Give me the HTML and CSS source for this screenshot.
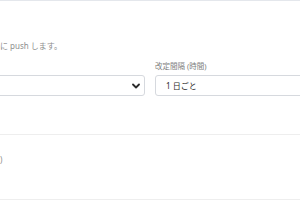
FILE: index.html
```html
<!DOCTYPE html>
<html lang="ja">
<head>
  <meta charset="UTF-8">
  <meta name="viewport" content="width=device-width, initial-scale=1.0">
  <title>設定</title>
  <link rel="stylesheet" href="styles.css">
</head>
<body>
  <section class="block">
    <p class="help">に push します。</p>

    <div class="fields">
      <div class="field">
        <label class="field-label">&nbsp;</label>
        <div class="select-wrap">
          <select class="control select">
            <option></option>
          </select>
          <svg class="chevron" width="8" height="6" viewBox="0 0 8 6">
            <path d="M1 1.5 L4 4.5 L7 1.5" fill="none" stroke="#2b2b2b" stroke-width="1.8" stroke-linecap="round" stroke-linejoin="round"/>
          </svg>
        </div>
      </div>
      <div class="field">
        <label class="field-label" for="interval">改定間隔 (時間)</label>
        <input class="control" id="interval" type="text" value="1 日ごと">
      </div>
    </div>
  </section>

  <section class="block block-second">
    <p class="help">)</p>
  </section>

  <section class="block block-third"></section>
</body>
</html>
```

FILE: styles.css
```css
* {
  margin: 0;
  padding: 0;
  box-sizing: border-box;
}

body {
  font-family: "Noto Sans", "Noto Sans CJK JP", sans-serif;
  background: #ffffff;
  color: #333333;
  overflow: hidden;
}

.block {
  border-top: 1px solid #e4e7ec;
  padding: 39px 0 38px;
}

.help {
  font-size: 8px;
  line-height: 11px;
  color: #8e8e8e;
}

.fields {
  display: grid;
  grid-template-columns: 1fr 1fr;
  gap: 10px;
  width: 324px;
  margin: 10px 0 0 -12px;
}

.field-label {
  display: block;
  font-size: 7.5px;
  line-height: 10px;
  color: #7d7d7d;
  margin-bottom: 4px;
}

.select-wrap {
  position: relative;
}

.control {
  display: block;
  width: 100%;
  height: 21px;
  padding: 0 10px;
  border: 1px solid #d6d9de;
  border-radius: 3px;
  background: #ffffff;
  font-family: inherit;
  font-size: 8px;
  color: #2b2b2b;
  outline: none;
}

.select {
  appearance: none;
  -webkit-appearance: none;
}

.chevron {
  position: absolute;
  right: 5px;
  top: 8px;
  pointer-events: none;
}

.block-second {
  border-top-color: #eeeeee;
  padding: 19px 0 0;
  height: 65px;
}

.block-third {
  border-top-color: #eeeeee;
  padding: 0;
}
```
